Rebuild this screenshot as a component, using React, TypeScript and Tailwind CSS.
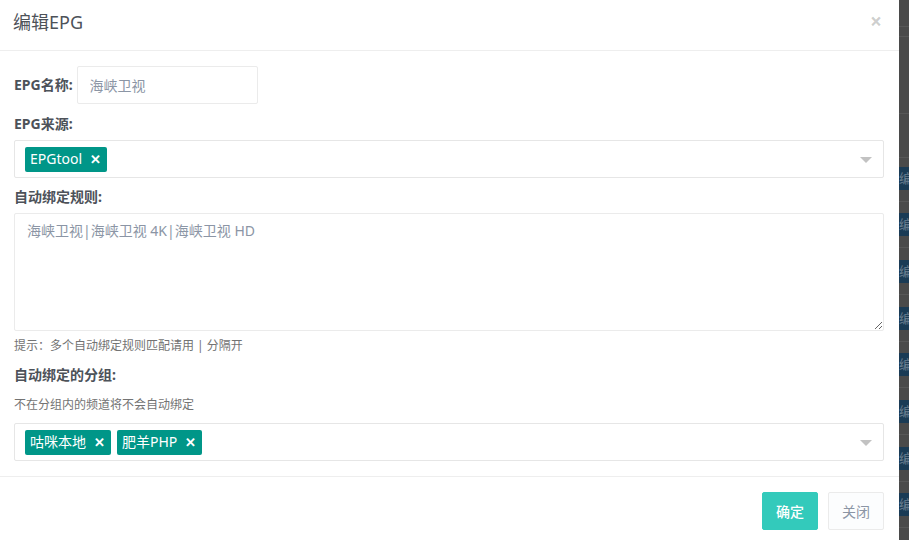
import { useState } from 'react';

const font = { fontFamily: '"Noto Sans", "Noto Sans CJK SC", sans-serif' };

function Tag({ label }: { label: string }) {
  return (
    <span className="inline-flex h-[25px] items-center rounded-[2px] bg-[#009688] pl-[5px] pr-[6px] text-[14px] leading-none text-white">
      {label}
      <span className="ml-[8px] text-[13px] font-bold">✕</span>
    </span>
  );
}

function TagSelect({ tags }: { tags: string[] }) {
  return (
    <div className="relative flex h-[38px] items-center gap-[6px] rounded-[2px] border border-[#e6e6e6] bg-white pl-[10px]">
      {tags.map((t) => (
        <Tag key={t} label={t} />
      ))}
      {/* dropdown arrow */}
      <span className="absolute right-[11px] top-[16px] h-0 w-0 border-x-[6px] border-t-[6px] border-x-transparent border-t-[#c2c2c2]" />
    </div>
  );
}

function Label({ children }: { children: string }) {
  return <div className="text-[14px] font-bold leading-[20px] text-[#4d5259]">{children}</div>;
}

// the dimmed page behind the modal
function Backdrop() {
  const rows = [0, 1, 2, 3, 4, 5, 6, 7];
  return (
    <div className="flex flex-1 flex-col overflow-hidden bg-[#4a4a4a]">
      <div className="h-[27px] border-b border-[#575757]" />
      <div className="h-[10px] border-b border-[#575757]" />
      <div className="h-[78px] border-b border-[#575757]" />
      <div className="h-[44px] border-b border-[#575757]" />
      <div className="h-[9px]" />
      {rows.map((r) => (
        <div key={r} className="flex h-[47px] flex-col">
          <div className="flex h-[23px] items-center overflow-hidden bg-[#1a3b55] text-[13px] leading-none text-[#6b7f90]">
            编
          </div>
          <div className="h-[12px] border-b border-[#575757]" />
        </div>
      ))}
    </div>
  );
}

export default function App() {
  const [name] = useState('');
  return (
    <div className="flex h-[540px] w-[909px] overflow-hidden bg-white" style={font}>
      <div className="flex w-[899px] shrink-0 flex-col bg-white">
        {/* header */}
        <div className="flex items-start justify-between border-b border-[#eeeeee] pb-[15px] pl-[13px] pr-[17px] pt-[9px]">
          <h4 className="text-[18px] leading-[26px] text-[#4d5259]">编辑EPG</h4>
          <span className="mt-[2px] text-[21px] font-bold leading-[21px] text-black/20">×</span>
        </div>

        {/* body */}
        <div className="flex flex-col pl-[14px] pr-[15px] pt-[15px]">
          <div className="flex items-center gap-[4px]">
            <Label>EPG名称:</Label>
            <input
              value={name}
              readOnly
              placeholder="海峡卫视"
              className="h-[38px] w-[181px] rounded-[2px] border border-[#ebebeb] px-[12px] text-[14px] text-[#4d5259] outline-none placeholder:text-[#8b95a5]"
            />
          </div>

          <div className="mt-[10px]">
            <Label>EPG来源:</Label>
          </div>
          <div className="mt-[6px]">
            <TagSelect tags={['EPGtool']} />
          </div>

          <div className="mt-[9px]">
            <Label>自动绑定规则:</Label>
          </div>
          <textarea
            readOnly
            placeholder="海峡卫视|海峡卫视 4K|海峡卫视 HD"
            className="mt-[6px] h-[118px] w-full rounded-[2px] border border-[#ebebeb] px-[12px] pb-[6px] pt-[7px] text-[14px] leading-[20px] text-[#4d5259] outline-none placeholder:text-[#8b95a5]"
          />
          <div className="mt-[6px] text-[12px] leading-[17px] text-[#737373]">提示：多个自动绑定规则匹配请用 | 分隔开</div>

          <div className="mt-[11px]">
            <Label>自动绑定的分组:</Label>
          </div>
          <div className="mt-[11px] text-[12px] leading-[17px] text-[#737373]">不在分组内的频道将不会自动绑定</div>
          <div className="mt-[10px]">
            <TagSelect tags={['咕咪本地', '肥羊PHP']} />
          </div>
        </div>

        {/* footer */}
        <div className="mt-[15px] flex justify-end gap-[10px] border-t border-[#eeeeee] pr-[15px] pt-[15px]">
          <button className="h-[38px] w-[56px] rounded-[2px] border border-[#33cabb] bg-[#33cabb] text-[14px] font-medium text-white">
            确定
          </button>
          <button className="h-[38px] w-[56px] rounded-[2px] border border-[#ebebeb] bg-[#fcfdfe] text-[14px] text-[#8b95a5]">
            关闭
          </button>
        </div>
      </div>
      <Backdrop />
    </div>
  );
}
